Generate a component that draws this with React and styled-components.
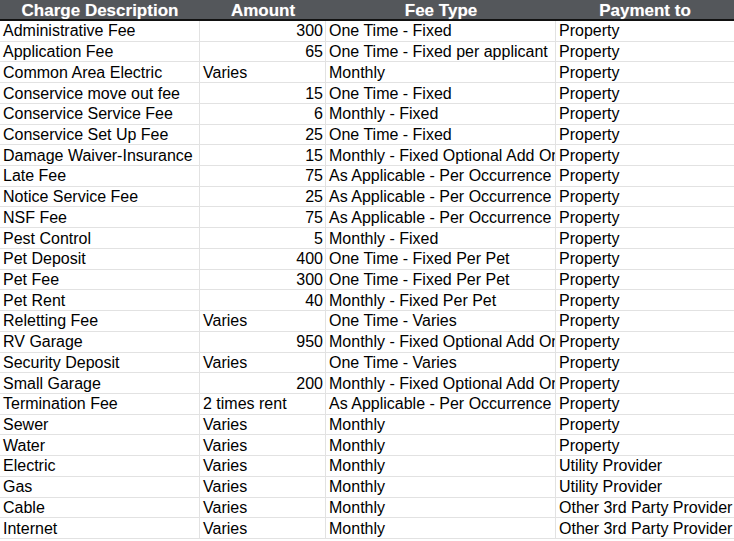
import React from "react";
import styled, { createGlobalStyle } from "styled-components";

const GlobalStyle = createGlobalStyle`
  html, body {
    margin: 0;
    padding: 0;
    background: #ffffff;
  }
  body {
    font-family: "Liberation Sans", Arial, sans-serif;
  }
`;

const rows = [
  ["Administrative Fee", "300", "One Time - Fixed", "Property"],
  ["Application Fee", "65", "One Time - Fixed per applicant", "Property"],
  ["Common Area Electric", "Varies", "Monthly", "Property"],
  ["Conservice move out fee", "15", "One Time - Fixed", "Property"],
  ["Conservice Service Fee", "6", "Monthly - Fixed", "Property"],
  ["Conservice Set Up Fee", "25", "One Time - Fixed", "Property"],
  ["Damage Waiver-Insurance", "15", "Monthly - Fixed Optional Add On", "Property"],
  ["Late Fee", "75", "As Applicable - Per Occurrence", "Property"],
  ["Notice Service Fee", "25", "As Applicable - Per Occurrence", "Property"],
  ["NSF Fee", "75", "As Applicable - Per Occurrence", "Property"],
  ["Pest Control", "5", "Monthly - Fixed", "Property"],
  ["Pet Deposit", "400", "One Time - Fixed Per Pet", "Property"],
  ["Pet Fee", "300", "One Time - Fixed Per Pet", "Property"],
  ["Pet Rent", "40", "Monthly - Fixed Per Pet", "Property"],
  ["Reletting Fee", "Varies", "One Time - Varies", "Property"],
  ["RV Garage", "950", "Monthly - Fixed Optional Add On", "Property"],
  ["Security Deposit", "Varies", "One Time - Varies", "Property"],
  ["Small Garage", "200", "Monthly - Fixed Optional Add On", "Property"],
  ["Termination Fee", "2 times rent", "As Applicable - Per Occurrence", "Property"],
  ["Sewer", "Varies", "Monthly", "Property"],
  ["Water", "Varies", "Monthly", "Property"],
  ["Electric", "Varies", "Monthly", "Utility Provider"],
  ["Gas", "Varies", "Monthly", "Utility Provider"],
  ["Cable", "Varies", "Monthly", "Other 3rd Party Provider"],
  ["Internet", "Varies", "Monthly", "Other 3rd Party Provider"],
];

// column widths of the sheet, grid lines sit on each column's right edge
const cols = "200px 126px 230px 178px";

const Sheet = styled.div`
  width: 734px;
  overflow: hidden;
`;

const HeaderRow = styled.div`
  display: grid;
  grid-template-columns: ${cols};
  height: 19px;
  background: #54575b;
  border-bottom: 2px solid #111111;
`;

const HeaderCell = styled.div`
  display: flex;
  align-items: center;
  justify-content: center;
  color: #ffffff;
  font-weight: bold;
  font-size: 17px;
  text-shadow: 0 0 1px rgba(255, 255, 255, 0.4);
  white-space: nowrap;
  padding-top: 1px;
`;

const Row = styled.div`
  display: grid;
  grid-template-columns: ${cols};
  height: 20.72px;
  box-sizing: border-box;
  border-bottom: 1px solid #e2e2e2;
`;

const Cell = styled.div`
  display: flex;
  align-items: center;
  justify-content: ${(p) => (p.$right ? "flex-end" : "flex-start")};
  padding: 1px 2px 0 3px;
  font-size: 16px;
  color: #000000;
  white-space: nowrap;
  overflow: hidden;
  border-right: ${(p) => (p.$last ? "none" : "1px solid #e2e2e2")};
`;

const isNumber = (v) => /^\d+$/.test(v);

const App = () => {
  return (
    <Sheet>
      <GlobalStyle />
      <HeaderRow>
        <HeaderCell>Charge Description</HeaderCell>
        <HeaderCell>Amount</HeaderCell>
        <HeaderCell>Fee Type</HeaderCell>
        <HeaderCell>Payment to</HeaderCell>
      </HeaderRow>
      {rows.map((r) => (
        <Row key={r[0]}>
          <Cell>{r[0]}</Cell>
          <Cell $right={isNumber(r[1])}>{r[1]}</Cell>
          <Cell>{r[2]}</Cell>
          <Cell $last>{r[3]}</Cell>
        </Row>
      ))}
    </Sheet>
  );
};

export default App;
